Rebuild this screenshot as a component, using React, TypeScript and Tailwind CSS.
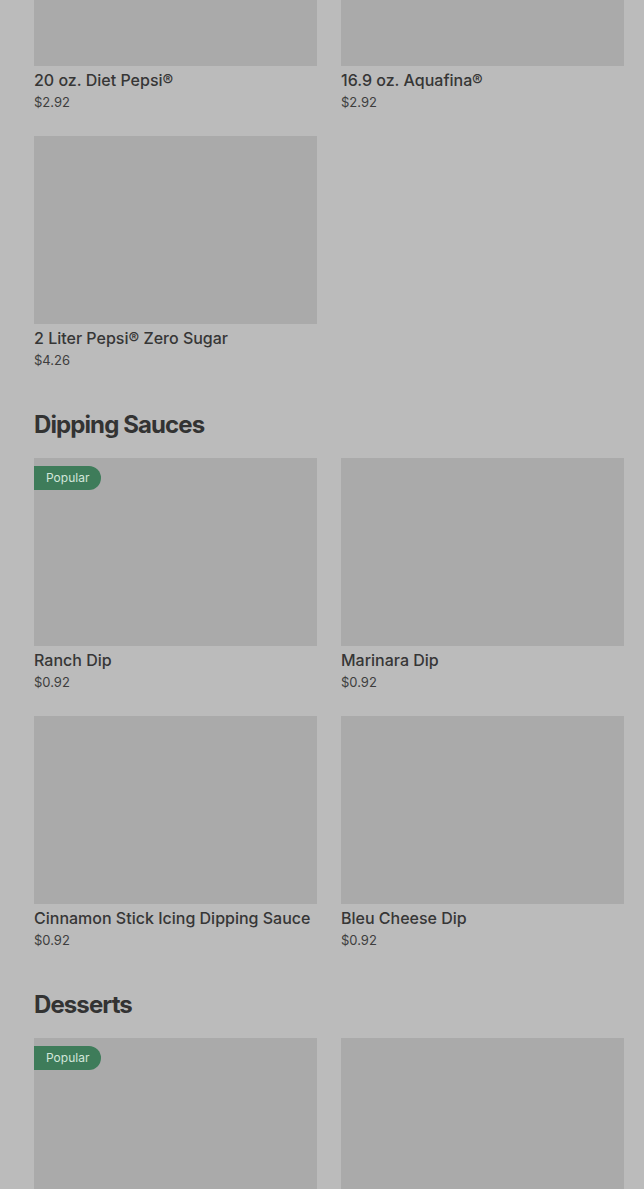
import React from 'react';

type Item = { name: string; price: string; popular?: boolean };

const drinks: Item[] = [
  { name: '20 oz. Diet Pepsi®', price: '$2.92' },
  { name: '16.9 oz. Aquafina®', price: '$2.92' },
  { name: '2 Liter Pepsi® Zero Sugar', price: '$4.26' },
];

const sauces: Item[] = [
  { name: 'Ranch Dip', price: '$0.92', popular: true },
  { name: 'Marinara Dip', price: '$0.92' },
  { name: 'Cinnamon Stick Icing Dipping Sauce', price: '$0.92' },
  { name: 'Bleu Cheese Dip', price: '$0.92' },
];

const desserts: Item[] = [
  { name: '', price: '', popular: true },
  { name: '', price: '' },
];

function Card({ item }: { item: Item }) {
  return (
    <div className="flex flex-col">
      <div className="relative h-[188px] bg-[#aaaaaa]">
        {item.popular && (
          <span className="absolute left-0 top-2 flex h-6 items-center rounded-r-full bg-[#3e7c5a] pl-3 pr-3 text-[12px] text-[#d3e6da]">
            Popular
          </span>
        )}
      </div>
      {item.name && (
        <>
          <div className="mt-[2px] text-[16px] leading-6 font-medium text-[#363636]">{item.name}</div>
          <div className="text-[13px] leading-5 text-[#3e3e3e]">{item.price}</div>
        </>
      )}
    </div>
  );
}

function Grid({ items }: { items: Item[] }) {
  return (
    <div className="grid grid-cols-2 gap-x-6 gap-y-6">
      {items.map((it, i) => (
        <Card key={i} item={it} />
      ))}
    </div>
  );
}

export default function App() {
  return (
    <div
      className="h-[1189px] overflow-hidden bg-[#bbbbbb]"
      style={{ fontFamily: 'Inter, "Noto Sans", sans-serif' }}
    >
      <div className="-mt-[122px] pl-[34px] pr-5">
        <Grid items={drinks} />
        <h2 className="mt-[39px] mb-[17px] text-[24px] leading-8 font-bold tracking-[-0.9px] text-[#333333]">Dipping Sauces</h2>
        <Grid items={sauces} />
        <h2 className="mt-[39px] mb-[17px] text-[24px] leading-8 font-bold tracking-[-0.9px] text-[#333333]">Desserts</h2>
        <Grid items={desserts} />
      </div>
    </div>
  );
}
